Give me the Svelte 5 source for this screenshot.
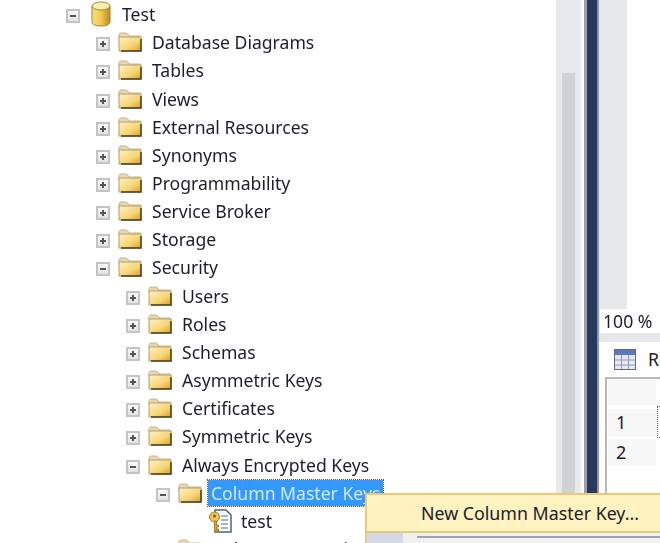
<script>
    const nodes = [
        { label: "Test", depth: 0, kind: "db", toggle: "minus" },
        { label: "Database Diagrams", depth: 1, kind: "folder", toggle: "plus" },
        { label: "Tables", depth: 1, kind: "folder", toggle: "plus" },
        { label: "Views", depth: 1, kind: "folder", toggle: "plus" },
        { label: "External Resources", depth: 1, kind: "folder", toggle: "plus" },
        { label: "Synonyms", depth: 1, kind: "folder", toggle: "plus" },
        { label: "Programmability", depth: 1, kind: "folder", toggle: "plus" },
        { label: "Service Broker", depth: 1, kind: "folder", toggle: "plus" },
        { label: "Storage", depth: 1, kind: "folder", toggle: "plus" },
        { label: "Security", depth: 1, kind: "folder", toggle: "minus" },
        { label: "Users", depth: 2, kind: "folder", toggle: "plus" },
        { label: "Roles", depth: 2, kind: "folder", toggle: "plus" },
        { label: "Schemas", depth: 2, kind: "folder", toggle: "plus" },
        { label: "Asymmetric Keys", depth: 2, kind: "folder", toggle: "plus" },
        { label: "Certificates", depth: 2, kind: "folder", toggle: "plus" },
        { label: "Symmetric Keys", depth: 2, kind: "folder", toggle: "plus" },
        { label: "Always Encrypted Keys", depth: 2, kind: "folder", toggle: "minus" },
        { label: "Column Master Keys", depth: 3, kind: "folder", toggle: "minus", selected: true },
        { label: "test", depth: 4, kind: "key", toggle: "none" },
        { label: "Column Encryption Keys", depth: 3, kind: "folder", toggle: "none" }
    ];
</script>

<div class="screen">
    <div class="tree">
        {#each nodes as node}
            <div class="row" class:db={node.kind === "db"} style="padding-left: {66 + node.depth * 30}px">
                {#if node.toggle === "none"}
                    <span class="toggle blank"></span>
                {:else}
                    <span class="toggle">
                        <i class="bar"></i>
                        {#if node.toggle === "plus"}<i class="stem"></i>{/if}
                    </span>
                {/if}

                {#if node.kind === "db"}
                    <svg class="icon cylinder" width="24" height="26" viewBox="0 0 24 26">
                        <defs>
                            <linearGradient id="can" x1="0" x2="1" y1="0" y2="0">
                                <stop offset="0" stop-color="#f7dc83" />
                                <stop offset="0.5" stop-color="#f2c94f" />
                                <stop offset="1" stop-color="#b98a22" />
                            </linearGradient>
                        </defs>
                        <path d="M3 5v16c0 2.500 4 4 9 4s9-1.500 9-4V5z" fill="url(#can)" stroke="#a8842f" />
                        <ellipse cx="12" cy="5" rx="9" ry="4" fill="#fbeeb5" stroke="#a8842f" />
                    </svg>
                {:else if node.kind === "folder"}
                    <svg class="icon folder" width="24" height="20" viewBox="0 0 24 20">
                        <defs>
                            <linearGradient id="fold" x1="0" x2="1" y1="0" y2="1">
                                <stop offset="0" stop-color="#fdf3c8" />
                                <stop offset="0.6" stop-color="#f6d474" />
                                <stop offset="1" stop-color="#d99f2d" />
                            </linearGradient>
                        </defs>
                        <path d="M1 4V2.500C1 1.500 2 1 3 1h5c1 0 2 1 2.500 2L11 4h11.500v3H1z" fill="#e6d9b2" stroke="#c4b78f" />
                        <rect x="1" y="5" width="22" height="14" fill="url(#fold)" stroke="#b3a06a" />
                        <path d="M3 19h20V7" fill="none" stroke="#4a3c1a" stroke-width="1.500" />
                    </svg>
                {:else}
                    <svg class="icon key" width="24" height="24" viewBox="0 0 24 24">
                        <path d="M7 1h11l5 5v17H7z" fill="#fbfcfe" stroke="#53647f" stroke-width="1.500" />
                        <path d="M13 7h7M13 11h7M13 15h7M13 19h7" stroke="#8b9bb5" stroke-width="1.500" />
                        <circle cx="6.500" cy="8" r="5" fill="#edc35a" stroke="#a67c1f" />
                        <circle cx="6.500" cy="7" r="1.500" fill="#7a5c14" />
                        <path d="M6.500 12v10h4v-2H8.500v-2h2v-2h-2v-4z" fill="#d9a93e" stroke="#a67c1f" />
                    </svg>
                {/if}

                <span class="label" class:selected={node.selected}>{node.label}</span>
            </div>
        {/each}
    </div>

    <div class="scrollbar"><div class="thumb"></div></div>
    <div class="divider"></div>

    <div class="right">
        <div class="upper">
            <div class="gutter"></div>
        </div>
        <div class="zoom-box">100 %</div>
        <div class="results">
            <div class="tab">
                <svg width="22" height="21" viewBox="0 0 22 21">
                    <rect x="0.500" y="0.500" width="21" height="20" fill="#e6e9f3" stroke="#5d6b88" />
                    <rect x="1" y="1" width="20" height="5" fill="#5a78c4" />
                    <path d="M1 11h20M1 16h20M7.500 6v14M14.500 6v14" stroke="#8e9ab3" />
                </svg>
                <span class="tab-text">Re</span>
            </div>
            <div class="grid">
                <div class="cell head"></div>
                <div class="cell">1</div>
                <div class="cell">2</div>
                <div class="focus"></div>
            </div>
        </div>
    </div>

    <div class="menu">
        <div class="item">New Column Master Key...</div>
        <div class="below">
            <div class="rail"></div>
            <div class="rest"><div class="sep"></div></div>
        </div>
    </div>
</div>

<style>
    :global(body) {
        background: #fff;
    }
    .screen {
        position: relative;
        display: flex;
        width: 660px;
        height: 543px;
        overflow: hidden;
        font-family: "Noto Sans", "Open Sans", sans-serif;
        font-size: 17.6px;
        color: #1d1d2b;
        background: #fff;
    }
    .tree {
        width: 556px;
        flex: none;
    }
    .row {
        display: flex;
        align-items: center;
        height: 28.17px;
        filter: blur(0.35px);
    }
    .toggle {
        position: relative;
        flex: none;
        width: 14px;
        height: 14px;
        margin-top: 4px;
        margin-right: 8px;
        box-sizing: border-box;
        border: 2px solid #c4c4c4;
        background: linear-gradient(#fafafa, #e2e2e2);
    }
    .toggle.blank {
        visibility: hidden;
    }
    .bar {
        position: absolute;
        left: 2px;
        right: 2px;
        top: 4px;
        height: 2px;
        background: #555;
    }
    .stem {
        position: absolute;
        top: 2px;
        bottom: 2px;
        left: 4px;
        width: 2px;
        background: #555;
    }
    .icon {
        flex: none;
    }
    .db .toggle {
        margin-right: 9px;
    }
    .cylinder {
        margin-right: 9px;
    }
    .folder {
        margin-right: 10px;
    }
    .key {
        margin-right: 9px;
    }
    .label {
        white-space: nowrap;
        line-height: 24px;
    }
    .selected {
        position: relative;
        z-index: 1;
        margin-left: -4px;
        padding: 1px 3px;
        background: #3399ff;
        color: #d3eaff;
        outline: 1px dotted #7a4a10;
    }
    .scrollbar {
        flex: none;
        width: 26px;
        margin-right: 2px;
        background: #e8e9ec;
        padding: 73px 5px 0 6px;
        box-sizing: border-box;
        border-right: 2px solid #f0f1f3;
    }
    .thumb {
        height: 470px;
        background: #d0d2d6;
    }
    .divider {
        flex: none;
        width: 15px;
        box-sizing: border-box;
        background: #29395c;
        border-left: 3px solid #98a0ae;
        border-right: 2px solid #8a96b8;
    }
    .right {
        flex: 1;
        min-width: 0;
        display: flex;
        flex-direction: column;
        background: #e6e7ea;
    }
    .upper {
        flex: none;
        height: 309px;
        background: #fff;
    }
    .gutter {
        width: 28px;
        height: 100%;
        background: #e6e7e9;
    }
    .zoom-box {
        flex: none;
        height: 24px;
        line-height: 24px;
        margin-left: 1px;
        padding-left: 3px;
        background: #fff;
        white-space: nowrap;
        filter: blur(0.3px);
    }
    .results {
        flex: 1;
        min-height: 0;
        overflow: hidden;
        margin-top: 9px;
        background: #fff;
        padding: 6px 0 0 6px;
    }
    .tab {
        display: flex;
        align-items: center;
        gap: 12px;
        padding-left: 9px;
        height: 22px;
    }
    .tab svg {
        flex: none;
    }
    .tab-text {
        white-space: nowrap;
    }
    .grid {
        position: relative;
        margin-top: 7px;
        height: 200px;
        border-left: 2px solid #b9b9b9;
        border-top: 2px solid #b9b9b9;
        padding: 1px 0 0 1px;
    }
    .cell {
        width: 48px;
        height: 27px;
        margin-bottom: 3px;
        padding-left: 8px;
        box-sizing: border-box;
        line-height: 27px;
        font-size: 18px;
        background: #f7f7f7;
    }
    .cell.head {
        height: 25px;
        margin-bottom: 4px;
    }
    .focus {
        position: absolute;
        left: 50px;
        top: 27px;
        width: 6px;
        height: 30px;
        border-left: 1px dotted #666;
        border-top: 1px dotted #666;
        border-bottom: 1px dotted #666;
    }
    .menu {
        position: absolute;
        left: 365px;
        top: 493px;
        width: 300px;
        height: 50px;
        box-sizing: border-box;
        display: flex;
        flex-direction: column;
        background: #f0f0f0;
        z-index: 2;
    }
    .item {
        height: 40px;
        box-sizing: border-box;
        border: 2px solid #e8c97a;
        background: #fdf2c0;
        line-height: 36px;
        padding-left: 54px;
        white-space: nowrap;
        font-size: 17.8px;
    }
    .below {
        flex: 1;
        display: flex;
        border-left: 2px solid #e8c97a;
    }
    .rail {
        width: 36px;
        background: #d3d9e8;
    }
    .rest {
        flex: 1;
        padding: 3px 0 0 14px;
    }
    .sep {
        height: 2px;
        background: #9da3b5;
    }
</style>
